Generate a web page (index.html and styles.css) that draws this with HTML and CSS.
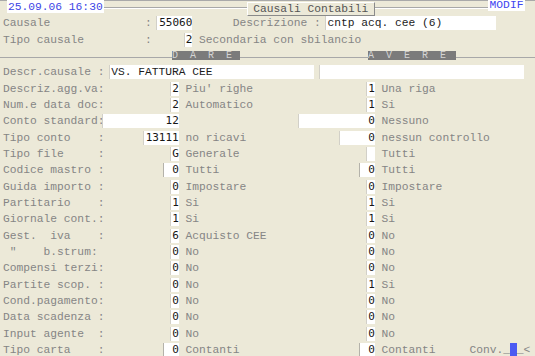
FILE: index.html
```html
<!DOCTYPE html>
<html>
  <head>
    <title>Causali Contabili</title>
    <link rel="stylesheet" href="styles.css">
  </head>
  <body>
    <div class="screen">
      <div class="top">
        <span class="clock">25.09.06 16:30</span>
        <span class="rule"></span>
        <span class="caption">Causali Contabili</span>
        <span class="rule"></span>
        <span class="mode">MODIF</span>
      </div>

      <div class="line">
        <span class="t w21">Causale</span><span class="t w2">:</span><span class="f num n5">55060</span>
        <span class="t w6"></span><span class="t w12">Descrizione</span><span class="t w2">:</span><span class="f str n25">cntp acq. cee (6)</span>
      </div>
      <div class="line">
        <span class="t w21">Tipo causale</span><span class="t w6">:</span><span class="f num n1">2</span>
        <span class="desc">Secondaria con sbilancio</span>
      </div>
      <div class="line heads">
        <span class="bar dare">D  A  R  E</span>
        <span class="bar avere">A  V  E  R  E</span>
      </div>
      <div class="line">
        <span class="t w16">Descr.causale :</span><span class="f str n30">VS. FATTURA CEE</span><span class="f str n30 gap1"></span>
      </div>

      <!-- dare / avere pairs -->
      <div class="pair">
        <div class="cell"><span class="lab">Descriz.agg.va:</span><span class="f num n1">2</span></div>
        <div class="cell"><span class="desc">Piu' righe</span><span class="f num n1">1</span></div>
        <div class="cell"><span class="desc">Una riga</span></div>
      </div>
      <div class="pair">
        <div class="cell"><span class="lab">Num.e data doc:</span><span class="f num n1">2</span></div>
        <div class="cell"><span class="desc">Automatico</span><span class="f num n1">1</span></div>
        <div class="cell"><span class="desc">Si</span></div>
      </div>
      <div class="pair">
        <div class="cell"><span class="lab">Conto standard:</span><span class="f num n11">12</span></div>
        <div class="cell"><span class="desc"></span><span class="f num n11">0</span></div>
        <div class="cell"><span class="desc">Nessuno</span></div>
      </div>
      <div class="pair">
        <div class="cell"><span class="lab">Tipo conto    :</span><span class="f num n5">13111</span></div>
        <div class="cell"><span class="desc">no ricavi</span><span class="f num n5">0</span></div>
        <div class="cell"><span class="desc">nessun controllo</span></div>
      </div>
      <div class="pair">
        <div class="cell"><span class="lab">Tipo file     :</span><span class="f num n1">G</span></div>
        <div class="cell"><span class="desc">Generale</span><span class="f num n1"></span></div>
        <div class="cell"><span class="desc">Tutti</span></div>
      </div>
      <div class="pair">
        <div class="cell"><span class="lab">Codice mastro :</span><span class="f num n2">0</span></div>
        <div class="cell"><span class="desc">Tutti</span><span class="f num n2">0</span></div>
        <div class="cell"><span class="desc">Tutti</span></div>
      </div>
      <div class="pair">
        <div class="cell"><span class="lab">Guida importo :</span><span class="f num n1">0</span></div>
        <div class="cell"><span class="desc">Impostare</span><span class="f num n1">0</span></div>
        <div class="cell"><span class="desc">Impostare</span></div>
      </div>
      <div class="pair">
        <div class="cell"><span class="lab">Partitario    :</span><span class="f num n1">1</span></div>
        <div class="cell"><span class="desc">Si</span><span class="f num n1">1</span></div>
        <div class="cell"><span class="desc">Si</span></div>
      </div>
      <div class="pair">
        <div class="cell"><span class="lab">Giornale cont.:</span><span class="f num n1">1</span></div>
        <div class="cell"><span class="desc">Si</span><span class="f num n1">1</span></div>
        <div class="cell"><span class="desc">Si</span></div>
      </div>
      <div class="pair">
        <div class="cell"><span class="lab">Gest.  iva    :</span><span class="f num n1">6</span></div>
        <div class="cell"><span class="desc">Acquisto CEE</span><span class="f num n1">0</span></div>
        <div class="cell"><span class="desc">No</span></div>
      </div>
      <div class="pair">
        <div class="cell"><span class="lab"> "    b.strum:</span><span class="f num n1">0</span></div>
        <div class="cell"><span class="desc">No</span><span class="f num n1">0</span></div>
        <div class="cell"><span class="desc">No</span></div>
      </div>
      <div class="pair">
        <div class="cell"><span class="lab">Compensi terzi:</span><span class="f num n1">0</span></div>
        <div class="cell"><span class="desc">No</span><span class="f num n1">0</span></div>
        <div class="cell"><span class="desc">No</span></div>
      </div>
      <div class="pair">
        <div class="cell"><span class="lab">Partite scop. :</span><span class="f num n1">0</span></div>
        <div class="cell"><span class="desc">No</span><span class="f num n1">1</span></div>
        <div class="cell"><span class="desc">Si</span></div>
      </div>
      <div class="pair">
        <div class="cell"><span class="lab">Cond.pagamento:</span><span class="f num n1">0</span></div>
        <div class="cell"><span class="desc">No</span><span class="f num n1">0</span></div>
        <div class="cell"><span class="desc">No</span></div>
      </div>
      <div class="pair">
        <div class="cell"><span class="lab">Data scadenza :</span><span class="f num n1">0</span></div>
        <div class="cell"><span class="desc">No</span><span class="f num n1">0</span></div>
        <div class="cell"><span class="desc">No</span></div>
      </div>
      <div class="pair">
        <div class="cell"><span class="lab">Input agente  :</span><span class="f num n1">0</span></div>
        <div class="cell"><span class="desc">No</span><span class="f num n1">0</span></div>
        <div class="cell"><span class="desc">No</span></div>
      </div>
      <div class="pair">
        <div class="cell"><span class="lab">Tipo carta    :</span><span class="f num n2">0</span></div>
        <div class="cell"><span class="desc">Contanti</span><span class="f num n2">0</span></div>
        <div class="cell tail">
          <span class="desc">Contanti</span>
          <span class="conv">Conv._<span class="cursor"></span>_&lt;</span>
        </div>
      </div>
    </div>
  </body>
</html>
```

FILE: styles.css
```css
html, body {
  height: 356px;
  overflow: hidden;
}

body {
  background: #ece9d8;
  color: #858585;
  font-family: "Liberation Mono", "Courier New", monospace;
  font-size: 11.27px;
  margin: 0;
}

.screen {
  --c: 6.76px;
  --r: 16.34px;
  background: linear-gradient(#a9a9a9, #a9a9a9) 0 0 / 100% 1px no-repeat;
  padding-left: 3px;
}

/* title strip */
.top {
  display: grid;
  grid-template-columns: calc(var(--c) * 14 + 2px) 1fr calc(var(--c) * 19) 113px 37px;
  height: 15.14px;
  padding-left: 4px;
  padding-right: 10px;
}

.clock {
  background: #fff;
  color: #3c45e6;
  height: 13px;
  line-height: 14px;
  padding-left: 1px;
  white-space: pre;
}

.rule {
  background: #a8a8a8;
  box-shadow: 0 1px #fff;
  height: 1px;
  margin-top: 7px;
}

.caption {
  border: 1px solid;
  border-color: #fff #8a8a8a #8a8a8a #fff;
  color: #555;
  height: 12px;
  line-height: 12px;
  margin-top: 2px;
  text-align: center;
  white-space: pre;
}

.mode {
  background: #fff;
  color: #3d45f0;
  height: 11px;
  line-height: 11px;
  text-align: center;
}

/* rows */
.line {
  align-items: center;
  display: flex;
  height: var(--r);
}

.t, .lab, .desc {
  flex: none;
  white-space: pre;
}

.desc {
  padding-left: var(--c);
}

.w2 { width: calc(var(--c) * 2); }
.w6 { width: calc(var(--c) * 6); }
.w12 { width: calc(var(--c) * 12); }
.w16 { width: calc(var(--c) * 16); }
.w21 { width: calc(var(--c) * 21); }

.heads {
  align-items: flex-start;
  background: linear-gradient(#a8a8a8, #a8a8a8) 0 9px / 100% 1px no-repeat;
  margin-left: -3px;
  padding-left: 3px;
}

.bar {
  background: #7b7b7b;
  color: #d4d4d4;
  flex: none;
  font-size: 10px;
  height: 9px;
  line-height: 9px;
  margin-top: 3.5px;
  overflow: hidden;
  white-space: pre;
}

.dare {
  margin-left: calc(var(--c) * 25);
  width: calc(var(--c) * 10);
}

.avere {
  margin-left: calc(var(--c) * 19);
  width: calc(var(--c) * 13);
}

/* input fields */
.f {
  background: #fff;
  border-left: 1px solid #d2d0c8;
  box-sizing: content-box;
  color: #161616;
  flex: none;
  height: 14px;
  line-height: 14px;
  margin-left: -2px;
  overflow: hidden;
  padding-left: 1px;
  white-space: pre;
  width: calc(var(--c) * var(--n));
}

.num {
  font-family: "DejaVu Sans Mono", monospace;
  font-size: 11px;
  text-align: right;
}

.str {
  color: #1c1c1c;
  text-align: left;
}

.n1 { --n: 1; }
.n2 { --n: 2; border-left-color: #b4b2aa; }
.n5 { --n: 5; }
.n11 { --n: 11; }
.n25 { --n: 25; }
.n30 { --n: 30; }

.gap1 {
  margin-left: calc(var(--c) - 2px);
}

/* dare / avere rows */
.pair {
  display: grid;
  grid-template-columns: calc(var(--c) * 26) calc(var(--c) * 29) 1fr;
  height: var(--r);
}

.cell {
  align-items: center;
  display: flex;
  justify-content: space-between;
}

.tail {
  display: grid;
  grid-template-columns: calc(var(--c) * 14) auto;
  justify-content: start;
}

.conv {
  align-items: center;
  display: flex;
  white-space: pre;
}

.cursor {
  background: #4b5af2;
  height: 14px;
  width: var(--c);
}
```
